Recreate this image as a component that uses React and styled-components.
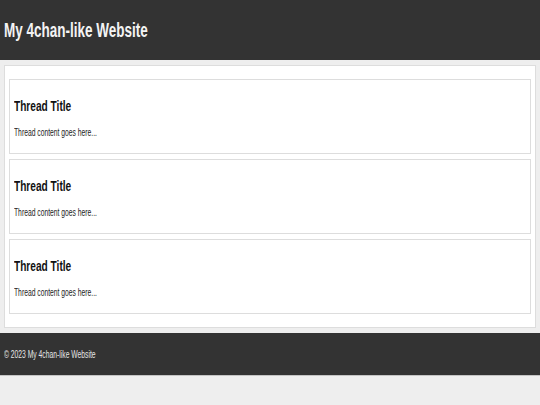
import React from "react";
import styled, { createGlobalStyle } from "styled-components";

const Global = createGlobalStyle`
  html, body { margin: 0; padding: 0; }
  body {
    background: #eeeeee;
    font-family: "Liberation Sans", Arial, sans-serif;
    color: #111;
  }
`;

const Squeeze = styled.span`
  display: inline-block;
  white-space: nowrap;
  transform: scaleX(0.675);
  transform-origin: left center;
`;

const Header = styled.header`
  background: #333333;
  height: 60px;
  padding-left: 4px;
  display: flex;
  align-items: center;
  box-sizing: border-box;
`;

const SiteTitle = styled.h1`
  margin: 0;
  font-size: 20px;
  font-weight: bold;
  color: #f4f4f4;
  line-height: 23px;
`;

const Main = styled.main`
  margin: 5px 4px 5px;
  background: #ffffff;
  border: 1px solid #dddddd;
  padding: 13px 4px;
  display: flex;
  flex-direction: column;
  gap: 5px;
`;

const Thread = styled.article`
  border: 1px solid #dddddd;
  padding: 17px 4px 14px;
  background: #fff;
`;

const ThreadTitle = styled.h2`
  margin: 0 0 13px;
  font-size: 15px;
  line-height: 17px;
  font-weight: bold;
  color: #111;
`;

const ThreadBody = styled.p`
  margin: 0;
  font-size: 10px;
  line-height: 12px;
  color: #222;
`;

const Footer = styled.footer`
  background: #333333;
  height: 43px;
  padding-left: 4px;
  display: flex;
  align-items: center;
  border-bottom: 1px solid #c4c4c4;
  box-sizing: border-box;
  color: #e6e6e6;
  font-size: 10px;
`;

const threads = [1, 2, 3];

export default function App() {
  return (
    <>
      <Global />
      <Header>
        <SiteTitle>
          <Squeeze>My 4chan-like Website</Squeeze>
        </SiteTitle>
      </Header>
      <Main>
        {threads.map((t) => (
          <Thread key={t}>
            <ThreadTitle>
              <Squeeze>Thread Title</Squeeze>
            </ThreadTitle>
            <ThreadBody>
              <Squeeze>Thread content goes here...</Squeeze>
            </ThreadBody>
          </Thread>
        ))}
      </Main>
      <Footer>
        <Squeeze>© 2023 My 4chan-like Website</Squeeze>
      </Footer>
    </>
  );
}
